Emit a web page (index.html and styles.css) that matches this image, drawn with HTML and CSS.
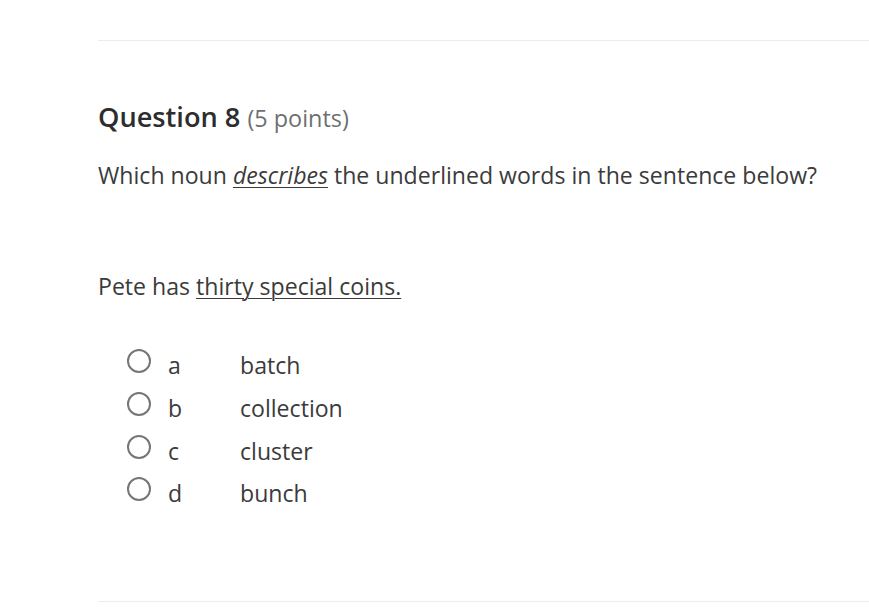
FILE: index.html
```html
<!DOCTYPE html>
<html>
<head>
<meta charset="utf-8">
<link rel="stylesheet" href="styles.css">
</head>
<body>
<div class="page">
  <div class="rule"></div>
  <h2 class="qtitle">Question 8 <span class="points">(5 points)</span></h2>
  <p class="prompt">Which noun <em class="u">describes</em> the underlined words in the sentence below?</p>
  <p class="sentence">Pete has <span class="u">thirty special coins.</span></p>
  <ul class="options">
    <li class="opt"><span class="radio"></span><span class="letter">a</span><span class="answer">batch</span></li>
    <li class="opt"><span class="radio"></span><span class="letter">b</span><span class="answer">collection</span></li>
    <li class="opt"><span class="radio"></span><span class="letter">c</span><span class="answer">cluster</span></li>
    <li class="opt"><span class="radio"></span><span class="letter">d</span><span class="answer">bunch</span></li>
  </ul>
  <div class="rule bottom"></div>
</div>
</body>
</html>
```
FILE: styles.css
```css
html, body {
  margin: 0;
  padding: 0;
  background: #ffffff;
}
body {
  font-family: "Open Sans", "Liberation Sans", sans-serif;
  color: #3b3b3b;
}
.page {
  padding-top: 40px;
  margin-left: 98px;
}
.rule {
  height: 1px;
  background: #ececec;
}
.qtitle {
  margin: 58px 0 0 0;
  font-size: 27.2px;
  font-weight: 600;
  line-height: 36px;
  color: #2d2d2d;
}
.points {
  font-size: 23.4px;
  font-weight: 400;
  color: #6f6f6f;
}
.prompt {
  margin: 21px 0 0 0;
  font-size: 23.1px;
  line-height: 36px;
}
.sentence {
  margin: 75px 0 0 0;
  font-size: 23.1px;
  line-height: 36px;
}
.u {
  text-decoration: underline;
  text-decoration-thickness: 1px;
  text-underline-offset: 3px;
}
.options {
  list-style: none;
  margin: 40px 0 0 29px;
  padding: 0;
}
.opt {
  display: flex;
  align-items: center;
  height: 42.7px;
  font-size: 23.1px;
}
.radio {
  width: 20px;
  height: 20px;
  border: 2px solid #767676;
  border-radius: 50%;
  margin-top: -8px;
}
.letter {
  width: 72px;
  margin-left: 17px;
}
.bottom {
  margin-top: 86px;
}
```
